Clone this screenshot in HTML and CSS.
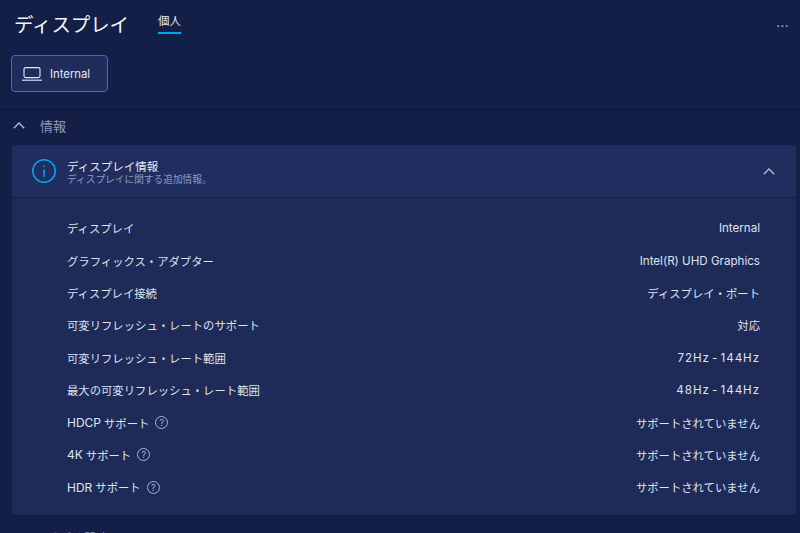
FILE: index.html
```html
<!DOCTYPE html>
<html lang="ja">
  <head>
    <meta charset="UTF-8" />
    <title>ディスプレイ</title>
    <link rel="stylesheet" href="styles.css">
  </head>

  <body>
    <div class="page">
      <div class="top">
        <div class="title_row">
          <h1>ディスプレイ</h1>
          <div class="tab">個人</div>
          <div class="more">...</div>
        </div>
        <div class="device">
          <svg class="laptop" width="20" height="14" viewBox="0 0 20 14" fill="none" stroke="#e6e9f2" stroke-width="1.1">
            <rect x="2" y="0.6" width="16" height="10" rx="1.6" />
            <path d="M0 13.2h20" />
          </svg>
          <span>Internal</span>
        </div>
      </div>

      <div class="section">
        <svg class="chevron" width="12" height="7" viewBox="0 0 12 7" fill="none" stroke="#b4bdd6" stroke-width="1.3">
          <path d="M0.8 6.2L6 1l5.2 5.2" />
        </svg>
        <span>情報</span>
      </div>

      <div class="card">
        <div class="card_head">
          <svg class="info" width="24" height="24" viewBox="0 0 24 24" fill="none" stroke="#00a7f0" stroke-width="1.5">
            <circle cx="12" cy="12" r="11.2" />
            <path d="M12 10.5v7.5M12 6.5v1.6" />
          </svg>
          <div class="head_text">
            <div class="head_title">ディスプレイ情報</div>
            <div class="head_sub">ディスプレイに関する追加情報。</div>
          </div>
          <svg class="chevron" width="12" height="7" viewBox="0 0 12 7" fill="none" stroke="#b4bdd6" stroke-width="1.3">
            <path d="M0.8 6.2L6 1l5.2 5.2" />
          </svg>
        </div>

        <div class="rows">
          <div class="row"><span>ディスプレイ</span><span class="en">Internal</span></div>
          <div class="row"><span>グラフィックス・アダプター</span><span class="en">Intel(R) UHD Graphics</span></div>
          <div class="row"><span>ディスプレイ接続</span><span>ディスプレイ・ポート</span></div>
          <div class="row"><span>可変リフレッシュ・レートのサポート</span><span>対応</span></div>
          <div class="row"><span>可変リフレッシュ・レート範囲</span><span class="range">72Hz - 144Hz</span></div>
          <div class="row"><span>最大の可変リフレッシュ・レート範囲</span><span class="range">48Hz - 144Hz</span></div>
          <div class="row"><span><b class="latin">HDCP</b>サポート<i class="help">?</i></span><span>サポートされていません</span></div>
          <div class="row"><span><b class="latin">4K</b>サポート<i class="help">?</i></span><span>サポートされていません</span></div>
          <div class="row"><span><b class="latin">HDR</b>サポート<i class="help">?</i></span><span>サポートされていません</span></div>
        </div>
      </div>

      <div class="section next">
        <span>ビデオ設定</span>
      </div>
    </div>
  </body>
</html>
```

FILE: styles.css
```css
html,
body {
  margin: 0;
  height: 100%;
  overflow: hidden;
}

.page {
  height: 533px;
  overflow: hidden;
  background: #131f47;
  color: #e6e9f2;
  font-family: Inter, "Noto Sans CJK JP", sans-serif;
}

.top {
  height: 109px;
  padding: 0 11px;
  border-bottom: 2px solid #101a3d;
}

.title_row {
  display: flex;
  align-items: flex-start;
  height: 55px;
}

h1 {
  margin: 12px 0 0 3px;
  font-size: 19.4px;
  line-height: 26px;
  font-weight: 400;
  color: #f4f6fb;
}

.tab {
  margin: 13px 0 0 29px;
  padding-bottom: 2px;
  height: 17px;
  font-size: 11.5px;
  line-height: 17px;
  border-bottom: 2px solid #00a7f0;
}

.more {
  margin: 16px 0 0 auto;
  font-size: 13px;
  line-height: 13px;
  letter-spacing: 0.5px;
  color: #aab4d0;
}

.device {
  display: flex;
  align-items: center;
  box-sizing: border-box;
  width: 97px;
  height: 37px;
  padding: 1px 0 0 10px;
  background: #1f2c5c;
  border: 1px solid #0a84d6;
  border-radius: 4px;
  font-size: 11.3px;
}

.device span {
  margin: 0 0 1px 8px;
}

.section {
  display: flex;
  align-items: center;
  height: 34px;
  padding: 0 0 6px 13px;
  box-sizing: border-box;
  font-size: 13px;
  color: #8f9bbd;
}

.section span {
  margin-left: 15px;
}

.section.next {
  margin-top: 8px;
  padding-left: 30px;
}

.card {
  margin: 0 4px 0 12px;
  height: 370px;
  background: #1e2b59;
  border-radius: 4px;
}

.card_head {
  display: flex;
  align-items: center;
  box-sizing: border-box;
  height: 53px;
  padding: 0 21px 0 20px;
  background: #202d5e;
  border-bottom: 1px solid #162149;
  border-radius: 4px 4px 0 0;
}

.head_text {
  flex: 1;
  margin: 3px 0 0 11px;
}

.head_title {
  font-size: 11.5px;
  line-height: 14px;
}

.head_sub {
  font-size: 9.7px;
  line-height: 11px;
  color: #8f9bbd;
}

.rows {
  padding: 14px 36px 0 55px;
}

.row {
  display: flex;
  justify-content: space-between;
  align-items: center;
  height: 32.4px;
  font-size: 11.35px;
  color: #dfe3ee;
}

.row span {
  display: flex;
  align-items: center;
}

.row .en {
  font-size: 11.6px;
}

.row .range {
  font-size: 11.6px;
  letter-spacing: 0.95px;
  word-spacing: -2px;
}

.latin {
  margin-right: 3px;
  font-size: 12px;
  font-weight: 400;
}

.help {
  display: inline-block;
  box-sizing: border-box;
  width: 13px;
  height: 13px;
  margin-left: 6px;
  border: 1px solid #aab4d0;
  border-radius: 50%;
  font-size: 9px;
  line-height: 11px;
  font-style: normal;
  text-align: center;
  color: #aab4d0;
}
```
